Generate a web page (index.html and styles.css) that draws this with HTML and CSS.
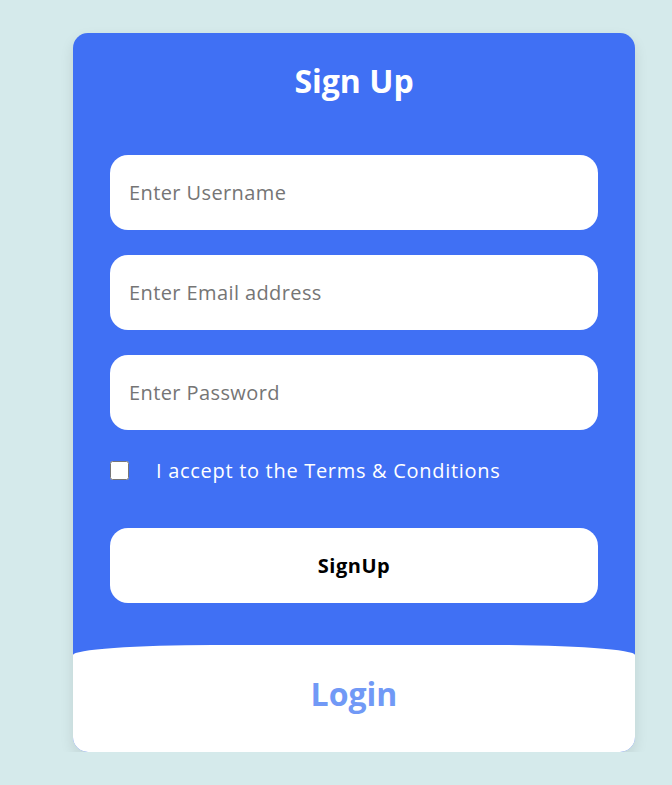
FILE: index.html
```html
<!DOCTYPE html>
<html lang="en">
<head>
<meta charset="utf-8">
<title>Sign Up</title>
<link rel="stylesheet" href="styles.css">
</head>
<body>
<div class="card">
  <form class="signup">
    <h1 class="title">Sign Up</h1>
    <input class="field" type="text" placeholder="Enter Username">
    <input class="field" type="email" placeholder="Enter Email address">
    <input class="field" type="password" placeholder="Enter Password">
    <label class="terms"><input type="checkbox" class="check"><span>I accept to the Terms &amp; Conditions</span></label>
    <button type="button" class="btn">SignUp</button>
  </form>
  <div class="login"><span class="login-text">Login</span></div>
</div>
</body>
</html>
```
FILE: styles.css
```css
* { box-sizing: border-box; }
body {
  margin: 0;
  background: #d5eaeb;
  font-family: "Open Sans", "Liberation Sans", sans-serif;
  padding: 33px 0 0 73px;
}
.card {
  width: 562px;
  height: 719px;
  background: #4070f4;
  border-radius: 15px;
  overflow: hidden;
  box-shadow: 0 6px 14px rgba(0, 0, 0, 0.1);
  display: flex;
  flex-direction: column;
}
.signup {
  display: flex;
  flex-direction: column;
  padding: 28px 37px 0;
}
.title {
  margin: 0 0 54px;
  height: 40px;
  line-height: 40px;
  text-align: center;
  color: #fff;
  font-size: 32px;
  font-weight: 700;
}
.field {
  height: 75px;
  border: none;
  border-radius: 18px;
  padding: 0 19px;
  font-family: inherit;
  font-size: 20px;
  letter-spacing: 0.4px;
  color: #333;
  background: #fff;
  outline: none;
  margin-bottom: 25px;
}
.field::placeholder { color: #757575; }
.terms {
  display: flex;
  align-items: center;
  height: 30px;
  gap: 27px;
  color: #fff;
  font-size: 20px;
  letter-spacing: 0.7px;
  margin-bottom: 43px;
}
.check {
  width: 19px;
  height: 19px;
  margin: 0;
}
.btn {
  height: 75px;
  border: none;
  border-radius: 18px;
  background: #fff;
  color: #000;
  font-family: inherit;
  font-size: 20px;
  letter-spacing: 0.5px;
  font-weight: 700;
}
.login {
  margin-top: 42px;
  flex: 1;
  background: #fff;
  border-radius: 140px 140px 0 0 / 10px 10px 0 0;
  display: flex;
  align-items: center;
  justify-content: center;
  padding-bottom: 10px;
}
.login-text {
  color: #7199f6;
  font-size: 32px;
  font-weight: 700;
}
```
